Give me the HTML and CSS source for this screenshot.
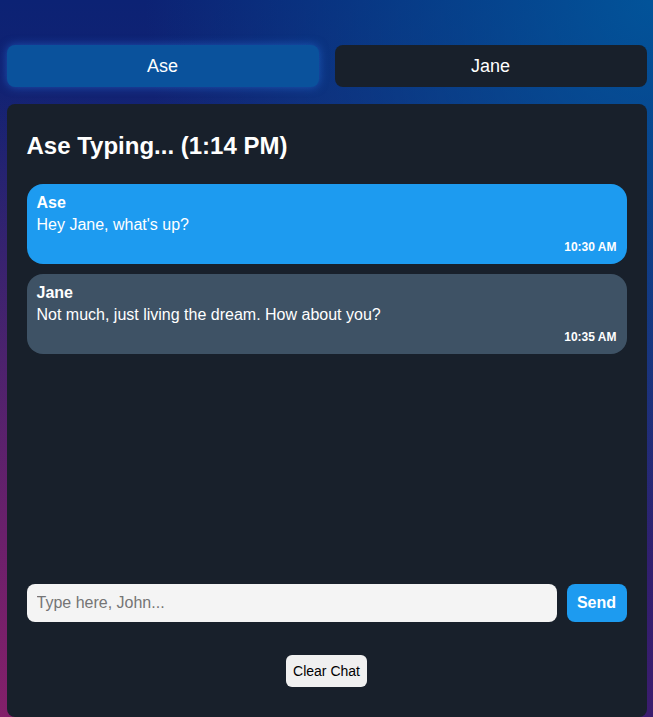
FILE: index.html
```html
<!DOCTYPE html>
<html lang="en">
<head>
<meta charset="utf-8">
<title>Chat</title>
<link rel="stylesheet" href="styles.css">
</head>
<body>
<div class="app">
  <div class="tabs">
    <button class="tab tab-active">Ase</button>
    <button class="tab">Jane</button>
  </div>
  <div class="panel">
    <h2 class="title">Ase Typing... (1:14 PM)</h2>
    <div class="messages">
      <div class="msg msg-ase">
        <div class="msg-name">Ase</div>
        <div class="msg-text">Hey Jane, what's up?</div>
        <div class="msg-time">10:30 AM</div>
      </div>
      <div class="msg msg-jane">
        <div class="msg-name">Jane</div>
        <div class="msg-text">Not much, just living the dream. How about you?</div>
        <div class="msg-time">10:35 AM</div>
      </div>
    </div>
    <div class="composer">
      <input class="composer-input" type="text" placeholder="Type here, John...">
      <button class="send">Send</button>
    </div>
    <div class="clear-row">
      <button class="clear">Clear Chat</button>
    </div>
  </div>
</div>
</body>
</html>
```
FILE: styles.css
```css
html {
  min-height: 100%;
  background:
    radial-gradient(ellipse at 100% 0%, rgba(0, 92, 160, 0.85), rgba(0, 92, 160, 0) 55%),
    radial-gradient(ellipse at 0% 100%, rgba(135, 32, 105, 0.95), rgba(135, 32, 105, 0) 62%),
    linear-gradient(to bottom, #0c2274 0%, #232470 50%, #3b1c6e 100%);
  background-attachment: fixed;
}

body {
  margin: 0;
  font-family: "Liberation Sans", Arial, sans-serif;
  color: #fff;
}

.app {
  width: 640px;
  margin: 0 auto;
  padding-top: 45px;
}

.tabs {
  display: grid;
  grid-template-columns: 1fr 1fr;
  gap: 16px;
  margin-bottom: 17px;
}

.tab {
  height: 42px;
  border: none;
  border-radius: 8px;
  background: #18202b;
  color: #fff;
  font-family: "Liberation Sans", Arial, sans-serif;
  font-size: 18px;
}

.tab-active {
  background: #0a529c;
  box-shadow: 0 0 10px rgba(40, 120, 230, 0.55);
}

.panel {
  background: #18202b;
  border-radius: 8px;
  padding: 20px 20px 30px;
}

.title {
  margin: 8px 0 24px;
  font-size: 24px;
  font-weight: bold;
  line-height: normal;
}

.messages {
  height: 380px;
  margin-bottom: 20px;
  display: flex;
  flex-direction: column;
  gap: 10px;
}

.msg {
  border-radius: 16px;
  padding: 10px 10px 10px;
}

.msg-ase {
  background: #1d9bf0;
}

.msg-jane {
  background: #3e5265;
}

.msg-name {
  font-weight: bold;
  font-size: 16px;
  margin-bottom: 4px;
}

.msg-text {
  font-size: 16px;
}

.msg-time {
  margin-top: 6px;
  text-align: right;
  font-size: 12px;
  font-weight: bold;
}

.composer {
  display: flex;
  gap: 10px;
}

.composer-input {
  flex: 1;
  height: 38px;
  box-sizing: border-box;
  border: none;
  border-radius: 8px;
  background: #f4f4f4;
  padding: 0 10px;
  font-family: "Liberation Sans", Arial, sans-serif;
  font-size: 16px;
  color: #222;
  outline: none;
}

.composer-input::placeholder {
  color: #757575;
}

.send {
  width: 60px;
  height: 38px;
  border: none;
  border-radius: 8px;
  background: #1d9bf0;
  color: #fff;
  font-family: "Liberation Sans", Arial, sans-serif;
  font-size: 16px;
  font-weight: bold;
  padding: 0;
}

.clear-row {
  display: flex;
  justify-content: center;
  margin-top: 33px;
}

.clear {
  height: 32px;
  border: none;
  border-radius: 6px;
  background: #f0f0f0;
  color: #000;
  font-family: "Liberation Sans", Arial, sans-serif;
  font-size: 14px;
  padding: 0 7px;
}
```
